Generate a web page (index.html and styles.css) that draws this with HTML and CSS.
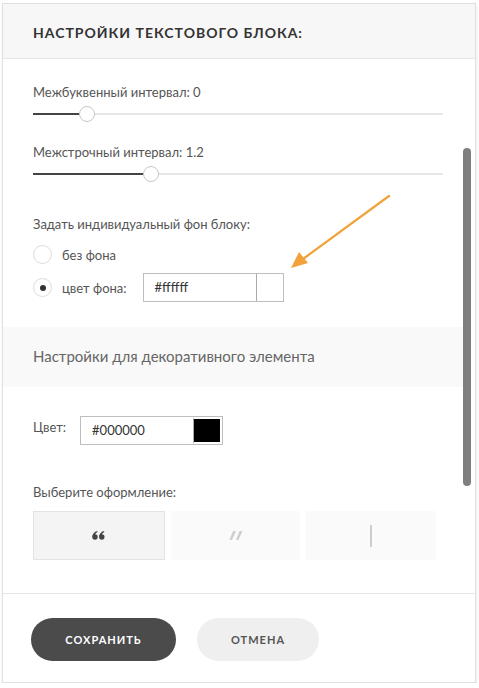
FILE: index.html
```html
<!DOCTYPE html>
<html lang="ru">
<head>
    <meta charset="UTF-8">
    <meta name="viewport" content="width=device-width, initial-scale=1.0">
    <title>Настройки текстового блока</title>
    <link rel="stylesheet" href="styles.css">
</head>
<body>

    <div class="modal">
        <div class="modal-head">Настройки текстового блока:</div>

        <div class="modal-body">
            <div class="section">
                <div class="field">
                    <div class="label">Межбуквенный интервал: 0</div>
                    <div class="slider">
                        <div class="slider-fill" style="width: 47px"></div>
                        <div class="slider-thumb" style="left: 46px"></div>
                    </div>
                </div>

                <div class="field">
                    <div class="label">Межстрочный интервал: 1.2</div>
                    <div class="slider">
                        <div class="slider-fill" style="width: 112px"></div>
                        <div class="slider-thumb" style="left: 110px"></div>
                    </div>
                </div>

                <div class="field field-bg">
                    <div class="label">Задать индивидуальный фон блоку:</div>
                    <div class="radio-row">
                        <span class="radio"></span>
                        <span>без фона</span>
                    </div>
                    <div class="radio-row">
                        <span class="radio checked"></span>
                        <span>цвет фона:</span>
                        <div class="color-input">
                            <span class="color-value">#ffffff</span>
                            <span class="swatch"></span>
                        </div>
                    </div>
                </div>
            </div>

            <div class="band">Настройки для декоративного элемента</div>

            <div class="section section-deco">
                <div class="color-row">
                    <span class="label-inline">Цвет:</span>
                    <div class="color-input">
                        <span class="color-value">#000000</span>
                        <span class="swatch swatch-black"></span>
                    </div>
                </div>

                <div class="label label-style">Выберите оформление:</div>
                <div class="styles">
                    <div class="style-opt active">
                        <svg width="13" height="9" viewBox="0 0 13 9" fill="#444">
                            <circle cx="3" cy="6" r="2.7"/>
                            <path d="M0.3,6 C0.3,3 2.2,0.8 5.2,0 L5.5,1.1 C3.8,1.8 2.9,3.1 3.1,4.8 Z"/>
                            <circle cx="9.8" cy="6" r="2.7"/>
                            <path d="M7.1,6 C7.1,3 9,0.8 12,0 L12.3,1.1 C10.6,1.8 9.7,3.1 9.9,4.8 Z"/>
                        </svg>
                    </div>
                    <div class="style-opt">
                        <svg width="14" height="9" viewBox="0 0 14 9" fill="#cfcfcf">
                            <polygon points="4,0 7,0 3,9 0.5,9"/>
                            <polygon points="10.5,0 13.5,0 9.5,9 7,9"/>
                        </svg>
                    </div>
                    <div class="style-opt"><span class="bar"></span></div>
                </div>
            </div>

            <div class="scrollbar"></div>

            <svg class="arrow" width="120" height="90" viewBox="0 0 120 90">
                <line x1="108" y1="7" x2="22" y2="70" stroke="#f2a23a" stroke-width="2.2" stroke-linecap="round"/>
                <polygon points="10,79 18,63 27,74" fill="#f2a23a"/>
            </svg>
        </div>

        <div class="modal-foot">
            <button class="btn btn-save">Сохранить</button>
            <button class="btn btn-cancel">Отмена</button>
        </div>
    </div>

</body>
</html>
```

FILE: styles.css
```css
body {
    margin: 0;
    padding: 3px 3px 0 2px;
    background-color: #fff;
    font-family: "Lato", "Open Sans", sans-serif;
    color: #555;
}
.modal {
    width: 472px;
    height: 678px;
    border: 1px solid #e0e0e0;
    background-color: #fff;
    box-shadow: 1px 2px 4px rgba(0, 0, 0, 0.08);
    display: flex;
    flex-direction: column;
}
.modal-head {
    height: 55px;
    box-sizing: border-box;
    padding: 20px 30px 0;
    background-color: #f7f7f7;
    border-bottom: 1px solid #e6e6e6;
    font-size: 14px;
    font-weight: bold;
    text-transform: uppercase;
    letter-spacing: 1px;
    color: #333;
}
.modal-body {
    position: relative;
    flex: 1;
    overflow: hidden;
}
.section {
    padding: 25px 32px 0 30px;
}
.field {
    margin-bottom: 29px;
}
.label {
    font-size: 13px;
    line-height: 16px;
    color: #555;
}
.slider {
    position: relative;
    height: 2px;
    margin-top: 13px;
    background-color: #e6e6e6;
}
.slider-fill {
    height: 2px;
    background-color: #444;
}
.slider-thumb {
    position: absolute;
    top: -7px;
    width: 14px;
    height: 14px;
    border: 1px solid #c8c8c8;
    border-radius: 50%;
    background-color: #fff;
}
.field-bg {
    margin-top: 41px;
    margin-bottom: 0;
}
.field-bg .label {
    margin-bottom: 9px;
}
.radio-row {
    display: flex;
    align-items: center;
    gap: 10px;
    height: 27px;
    margin-bottom: 6px;
    font-size: 13px;
    color: #555;
}
.radio {
    box-sizing: border-box;
    width: 19px;
    height: 19px;
    border: 1px solid #dcdcdc;
    border-radius: 50%;
    display: flex;
    align-items: center;
    justify-content: center;
}
.radio.checked::after {
    content: "";
    width: 6px;
    height: 6px;
    border-radius: 50%;
    background-color: #333;
}
.color-input {
    display: flex;
    height: 27px;
    border: 1px solid #bdbdbd;
    margin-left: 6px;
}
.color-value {
    width: 112px;
    box-sizing: border-box;
    padding: 5px 0 0 11px;
    font-size: 13px;
    color: #333;
}
.swatch {
    width: 26px;
    border-left: 1px solid #aaa;
    background-color: #fff;
}
.swatch-black {
    background-color: #000;
    border: 2px solid #fff;
    border-left: 1px solid #aaa;
    box-shadow: inset 0 0 0 1px #000;
}
.band {
    margin-top: 26px;
    height: 60px;
    box-sizing: border-box;
    padding: 20px 30px 0;
    background-color: #f9f9f9;
    margin-right: 4px;
    font-size: 15px;
    color: #666;
}
.section-deco {
    padding-top: 29px;
}
.color-row {
    display: flex;
    align-items: flex-start;
    gap: 14px;
}
.color-row .color-input {
    margin-left: 0;
}
.label-inline {
    font-size: 13px;
    padding-top: 3px;
}
.label-style {
    margin-top: 39px;
}
.styles {
    display: flex;
    gap: 6px;
    margin-top: 11px;
    margin-right: 7px;
}
.style-opt {
    flex: 1;
    height: 49px;
    box-sizing: border-box;
    background-color: #fafafa;
    display: flex;
    align-items: center;
    justify-content: center;
}
.style-opt.active {
    background-color: #f4f4f4;
    border: 1px solid #e3e3e3;
}
.bar {
    width: 2px;
    height: 22px;
    background-color: #ccc;
}
.scrollbar {
    position: absolute;
    top: 89px;
    left: 460px;
    width: 8px;
    height: 338px;
    border-radius: 4px;
    background-color: #7f7f7f;
}
.arrow {
    position: absolute;
    top: 130px;
    left: 278px;
}
.modal-foot {
    height: 89px;
    box-sizing: border-box;
    border-top: 1px solid #e6e6e6;
    padding: 24px 28px 0;
    display: flex;
    gap: 21px;
    align-items: flex-start;
}
.btn {
    height: 43px;
    border: none;
    border-radius: 22px;
    font-family: "Lato", "Open Sans", sans-serif;
    font-size: 11px;
    font-weight: bold;
    letter-spacing: 1px;
    text-transform: uppercase;
    cursor: pointer;
}
.btn-save {
    width: 145px;
    background-color: #4b4b4b;
    color: #fff;
}
.btn-cancel {
    width: 122px;
    background-color: #efefef;
    color: #555;
}
```
